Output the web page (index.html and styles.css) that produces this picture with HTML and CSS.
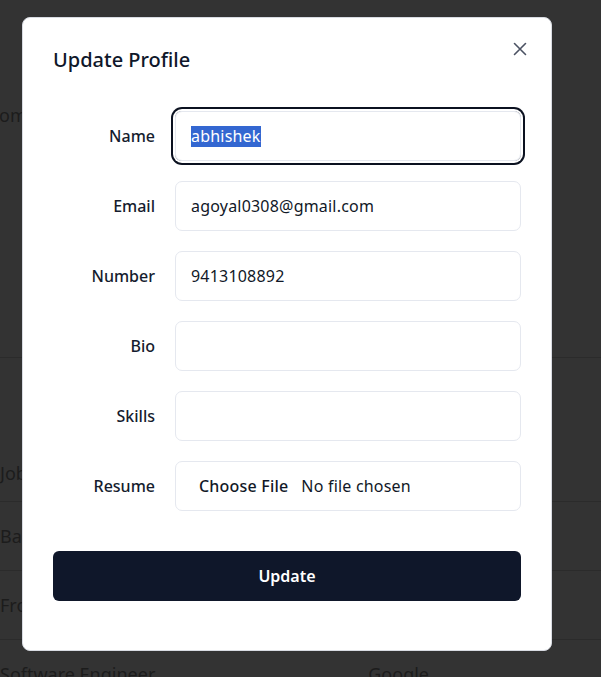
FILE: index.html
```html
<!DOCTYPE html>
<html lang="en">
<head>
<meta charset="utf-8">
<title>Update Profile</title>
<link rel="stylesheet" href="styles.css">
</head>
<body>
<div class="page">
  <div class="bg-hero"><span class="bg-text">Recommended</span></div>
  <div class="bg-table">
    <div class="bg-row bg-head"><span class="bg-text">Jobs</span></div>
    <div class="bg-row"><span class="bg-text">Backend Developer</span></div>
    <div class="bg-row"><span class="bg-text">Frontend Developer</span></div>
    <div class="bg-row"><span class="bg-text">Software Engineer</span><span class="bg-text bg-company">Google</span></div>
  </div>
</div>
<div class="overlay">
  <div class="modal">
    <button class="close" aria-label="Close">
      <svg width="14" height="14" viewBox="0 0 14 14"><path d="M1.5 1.5 L12.5 12.5 M12.5 1.5 L1.5 12.5" stroke="#4b5263" stroke-width="1.6" stroke-linecap="round"/></svg>
    </button>
    <h2 class="title">Update Profile</h2>
    <form class="form">
      <label class="label">Name</label>
      <div class="field focused"><span class="sel">abhishek</span></div>
      <label class="label">Email</label>
      <div class="field">agoyal0308@gmail.com</div>
      <label class="label">Number</label>
      <div class="field">9413108892</div>
      <label class="label">Bio</label>
      <div class="field"></div>
      <label class="label">Skills</label>
      <div class="field"></div>
      <label class="label">Resume</label>
      <div class="field file"><span class="choose">Choose File</span><span class="nofile">No file chosen</span></div>
    </form>
    <button class="submit" type="button">Update</button>
  </div>
</div>
</body>
</html>
```
FILE: styles.css
```css
html, body {
  margin: 0;
  padding: 0;
}
body {
  width: 601px;
  height: 677px;
  overflow: hidden;
  background: #333333;
  font-family: "Noto Sans", "Open Sans", sans-serif;
  position: relative;
}
.page {
  color: #1c1c1c;
  font-size: 18px;
}
.bg-hero {
  height: 357px;
  box-sizing: border-box;
  padding-top: 103px;
  margin-left: -31px;
}
.bg-row {
  border-top: 1px solid #2b2b2b;
  height: 68px;
  display: flex;
  align-items: center;
}
.bg-head {
  height: 144px;
  align-items: flex-end;
  padding-bottom: 16px;
  box-sizing: border-box;
}
.bg-row:last-child {
  align-items: flex-start;
  padding-top: 22px;
  box-sizing: border-box;
}
.bg-company {
  margin-left: auto;
  margin-right: 172px;
}
.overlay {
  position: absolute;
  inset: 0;
}
.modal {
  position: absolute;
  left: 22px;
  top: 17px;
  width: 530px;
  height: 634px;
  box-sizing: border-box;
  background: #ffffff;
  border: 1px solid #d8dbe2;
  border-radius: 8px;
  padding: 28px 30px 0 30px;
  color: #0f172a;
}
.close {
  position: absolute;
  right: 22px;
  top: 22px;
  width: 18px;
  height: 18px;
  padding: 0;
  border: 0;
  background: transparent;
  display: flex;
  align-items: center;
  justify-content: center;
}
.title {
  margin: 0;
  font-size: 20px;
  line-height: 28px;
  font-weight: 500;
  letter-spacing: 0;
}
.form {
  margin-top: 37px;
  display: grid;
  grid-template-columns: 102px 1fr;
  column-gap: 20px;
  row-gap: 20px;
  align-items: center;
}
.label {
  text-align: right;
  font-size: 16px;
  font-weight: 500;
  color: #151c2e;
}
.field {
  height: 50px;
  box-sizing: border-box;
  border: 1px solid #e5e8ef;
  border-radius: 7px;
  padding: 0 15px;
  display: flex;
  align-items: center;
  font-size: 16px;
  letter-spacing: 0.2px;
  color: #111827;
}
.field.focused {
  box-shadow: 0 0 0 2px #ffffff, 0 0 0 4px #0b1120;
}
.sel {
  background: #3367d1;
  color: #ffffff;
  line-height: 21px;
}
.choose {
  margin-left: 8px;
  font-weight: 500;
}
.nofile {
  margin-left: 13px;
}
.submit {
  display: block;
  width: 100%;
  margin-top: 40px;
  height: 50px;
  border: 0;
  border-radius: 6px;
  background: #0f172a;
  color: #ffffff;
  font-family: "Noto Sans", "Open Sans", sans-serif;
  font-size: 16px;
  font-weight: 600;
}
```
